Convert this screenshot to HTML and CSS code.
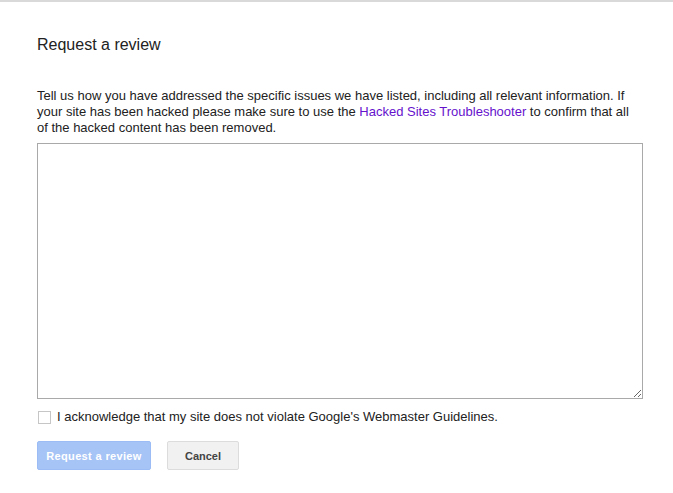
FILE: index.html
```html
<!DOCTYPE html>
<html>
<head>
<meta charset="utf-8">
<link rel="stylesheet" href="styles.css">
</head>
<body>
<div class="page">
  <h1 class="title">Request a review</h1>
  <p class="desc">Tell us how you have addressed the specific issues we have listed, including all relevant information. If your site has been hacked please make sure to use the <a class="link" href="#">Hacked Sites Troubleshooter</a> to confirm that all of the hacked content has been removed.</p>
  <textarea class="box"></textarea>
  <label class="ack"><span class="check"></span><span>I acknowledge that my site does not violate Google's Webmaster Guidelines.</span></label>
  <div class="actions">
    <button class="btn btn-primary">Request a review</button>
    <button class="btn btn-cancel">Cancel</button>
  </div>
</div>
</body>
</html>
```
FILE: styles.css
```css
html, body {
  margin: 0;
  padding: 0;
  background: #fff;
}
body {
  font-family: Arial, "Liberation Sans", sans-serif;
  color: #222;
  border-top: 2px solid #d9d9d9;
}
.page {
  padding: 33px 0 0 37px;
}
.title {
  margin: 0;
  font-size: 16px;
  font-weight: normal;
  line-height: 20px;
  color: #222;
}
.desc {
  margin: 33px 0 0 0;
  width: 597px;
  font-size: 13px;
  line-height: 16px;
}
.link {
  color: #6611cc;
  text-decoration: none;
}
.box {
  display: block;
  box-sizing: border-box;
  margin: 7px 0 0 0;
  width: 606px;
  height: 256px;
  border: 1px solid #a9a9a9;
  padding: 2px;
  resize: both;
  font-family: inherit;
}
.ack {
  display: flex;
  align-items: center;
  gap: 6px;
  margin-top: 10px;
  font-size: 13px;
  line-height: 16px;
}
.check {
  width: 11px;
  height: 11px;
  border: 1px solid #c6c6c6;
  margin-left: 1px;
  background: #fff;
}
.actions {
  display: flex;
  gap: 16px;
  margin-top: 16px;
}
.btn {
  box-sizing: border-box;
  height: 29px;
  border-radius: 2px;
  font-family: inherit;
  font-size: 11px;
  font-weight: bold;
  padding: 0 4px;
}
.btn-primary {
  width: 114px;
  background: #a6c4f6;
  border: 1px solid #9bbcf4;
  color: #fff;
  letter-spacing: 0.35px;
}
.btn-cancel {
  width: 72px;
  background: #f1f1f1;
  border: 1px solid #dcdcdc;
  color: #444;
}
```
